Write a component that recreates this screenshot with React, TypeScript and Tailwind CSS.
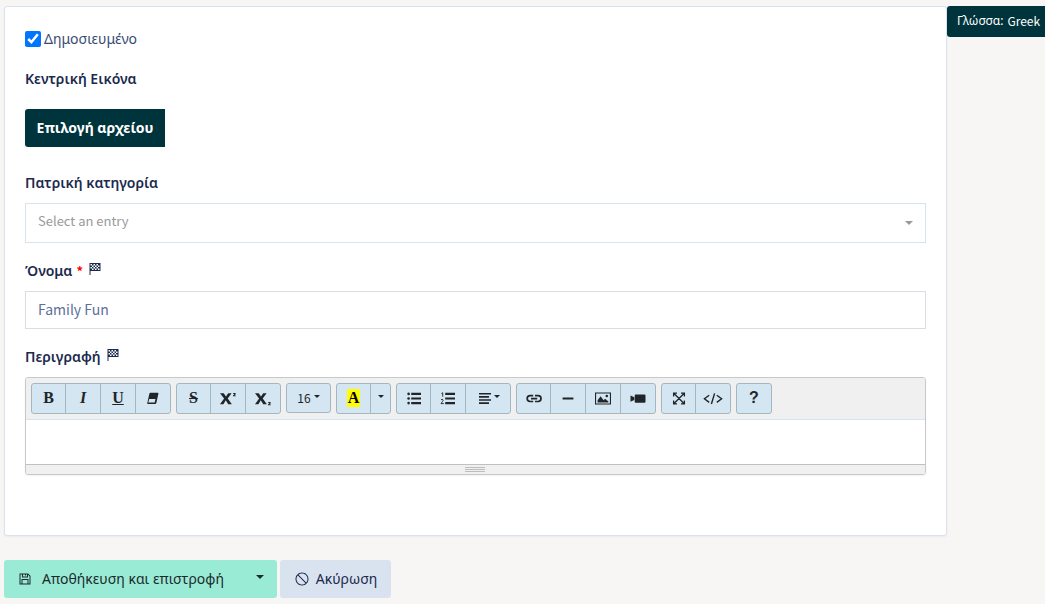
import type { ReactNode } from "react";
import { LiaBanSolid, LiaFlagCheckeredSolid, LiaSaveSolid } from "react-icons/lia";

const greek = "font-['Noto_Sans',sans-serif]";
const latin = "font-['Noto_Sans_CJK_SC',sans-serif]";

function Caret({ className = "" }: { className?: string }) {
  return (
    <svg viewBox="0 0 8 4" className={`h-1 w-2 shrink-0 fill-current ${className}`} aria-hidden="true">
      <path d="M0 0h8L4 4z" />
    </svg>
  );
}

function SmallCaret({ className = "" }: { className?: string }) {
  return (
    <svg viewBox="0 0 6 3" className={`h-[3px] w-1.5 shrink-0 fill-current ${className}`} aria-hidden="true">
      <path d="M0 0h6L3 3z" />
    </svg>
  );
}

function Icon({ children }: { children: ReactNode }) {
  return (
    <svg viewBox="0 0 16 16" className="size-4 shrink-0 fill-current" aria-hidden="true">
      {children}
    </svg>
  );
}

function Tool({ label, size = "w-9 first:w-[35px]", children }: { label: string; size?: string; children: ReactNode }) {
  return (
    <button
      type="button"
      aria-label={label}
      className={`-ml-px flex h-[31px] items-center justify-center border border-[#a4b7c1] bg-[#d4e6f1] pb-px text-[#212529] first:ml-0 first:rounded-l-[3px] last:rounded-r-[3px] ${size}`}
    >
      {children}
    </button>
  );
}

function Group({ children }: { children: ReactNode }) {
  return <div className="flex">{children}</div>;
}

const serif = "font-['Liberation_Serif',serif] text-base leading-[18px] font-bold";
const labelText = `flex h-6 items-center text-sm font-semibold text-[#1b2a4e] ${greek}`;

function Toolbar() {
  return (
    <div className="flex flex-wrap gap-[5px] border-b border-[#d9e2ef] bg-[#f0f0f0] px-[5px] py-[5px]">
      <Group>
        <Tool label="Bold"><span className={serif}>B</span></Tool>
        <Tool label="Italic"><span className={`${serif} italic`}>I</span></Tool>
        <Tool label="Underline"><span className={`${serif} underline`}>U</span></Tool>
        <Tool label="Remove Font Style">
          <Icon>
            <path fillRule="evenodd" d="M5.3 2.8h7.5q.9 0 .6.9l-2 9q-.3 1.2-1.4 1.2H3q-1 0-.7-1l2-9q.2-1.1 1-1.1zM4.2 9l-.9 3.6h6.3l.9-3.6z" />
          </Icon>
        </Tool>
      </Group>
      <Group>
        <Tool label="Strikethrough"><span className={`${serif} line-through`}>S</span></Tool>
        <Tool label="Superscript">
          <Icon>
            <path d="M0 3.2h3.7L6 6.6l2.2-3.4h3.4L7.7 8.4l4.2 5.8H8.2L5.8 10.3l-2.4 3.9H0l4.1-5.6z" />
            <path d="M13.2 3h2.4v1.4l-1.1 1h1.3v.8H13v-.8l1.6-1.5h-1.4z" />
          </Icon>
        </Tool>
        <Tool label="Subscript">
          <Icon>
            <path d="M0 3.2h3.7L6 6.6l2.2-3.4h3.4L7.7 8.4l4.2 5.8H8.2L5.8 10.3l-2.4 3.9H0l4.1-5.6z" />
            <path d="M13.2 12h2.4v1.4l-1.1 1h1.3v.8H13v-.8l1.6-1.5h-1.4z" />
          </Icon>
        </Tool>
      </Group>
      <Group>
        <button
          type="button"
          aria-label="Font Size"
          className={`flex h-[30px] w-[45px] items-center justify-center gap-[3px] rounded-[3px] border border-[#a4b7c1] bg-[#d4e6f1] text-xs text-[#212529] ${latin}`}
        >
          16
          <SmallCaret className="mb-1" />
        </button>
      </Group>
      <Group>
        <Tool label="Recent Color"><span className={`${serif} bg-[#ffff00] px-px text-black`}>A</span></Tool>
        <Tool label="More Color" size="w-[21px]"><SmallCaret className="mb-1" /></Tool>
      </Group>
      <Group>
        <Tool label="Unordered list">
          <Icon>
            <path d="M5.2 2.8H15V5H5.2zM5.2 7.4H15v2.2H5.2zM5.2 12H15v2.2H5.2z" />
            <circle cx="2.6" cy="3.9" r="1.3" />
            <circle cx="2.6" cy="8.5" r="1.3" />
            <circle cx="2.6" cy="13.1" r="1.3" />
          </Icon>
        </Tool>
        <Tool label="Ordered list">
          <Icon>
            <path d="M5.2 2.8H15V5H5.2zM5.2 7.4H15v2.2H5.2zM5.2 12H15v2.2H5.2z" />
            <path d="M1.4 3.6 2.7 2.7v4M1 9.8q1.2-1 2 0 .4.8-.4 1.6L1 13.6h2.8" fill="none" stroke="currentColor" strokeWidth=".9" />
          </Icon>
        </Tool>
        <Tool label="Paragraph" size="w-[46px]">
          <Icon><path d="M2 3h12v1.6H2zM2 6.1h10v1.6H2zM2 9.2h12v1.6H2zM2 12.3h10v1.6H2z" /></Icon>
          <SmallCaret className="mb-1 ml-px" />
        </Tool>
      </Group>
      <Group>
        <Tool label="Link">
          <Icon>
            <path d="M7.2 11.5H4.1a2.9 2.9 0 1 1 0-5.8h3.1M9 5.7h3.1a2.9 2.9 0 1 1 0 5.8H9M5 8.6h6.2" fill="none" stroke="currentColor" strokeWidth="1.7" />
          </Icon>
        </Tool>
        <Tool label="Insert Horizontal Rule"><Icon><path d="M2.6 7.4h10.8v2.2H2.6z" /></Icon></Tool>
        <Tool label="Picture">
          <Icon>
            <path fillRule="evenodd" d="M0 2.5h16v12H0zM1.1 3.6v9.8h13.8V3.6z" />
            <path d="M2.6 12.6v-2.4l3-3.9 3 3.9 1.5-1.5 3.3 2.8v1.1z" />
            <circle cx="11.8" cy="6" r="1.3" />
          </Icon>
        </Tool>
        <Tool label="Video">
          <Icon><path d="M.5 5.4 4.2 7.3v2.6L.5 11.8zM5.7 4.4h8.8q1 0 1 1v6.4q0 1-1 1H5.7q-1 0-1-1V5.4q0-1 1-1z" /></Icon>
        </Tool>
      </Group>
      <Group>
        <Tool label="Full Screen">
          <Icon>
            <path d="m3 3.5 10 10M13 3.5l-10 10M2.6 6.5V3.1H6M10 3.1h3.4v3.4M13.4 10.5v3.4H10M6 13.9H2.6v-3.4" fill="none" stroke="currentColor" strokeWidth="1.3" />
          </Icon>
        </Tool>
        <Tool label="Code View">
          <svg viewBox="0 0 20 16" className="h-4 w-5 shrink-0" fill="none" stroke="currentColor" strokeWidth="1.4" aria-hidden="true">
            <path d="M6.2 5.2 1.4 8.8l4.8 3.6M13.8 5.2l4.8 3.6-4.8 3.6M11.6 3.4 8.4 14" />
          </svg>
        </Tool>
      </Group>
      <Group>
        <Tool label="Help" size="w-9"><span className="font-['Liberation_Sans',sans-serif] text-base leading-4 font-bold">?</span></Tool>
      </Group>
    </div>
  );
}

export default function App() {
  return (
    <div className={`min-h-screen bg-[#f7f6f5] pt-1.5 pb-1.5 pl-1 text-sm text-[#1b2a4e] ${greek}`}>
      <div className="flex items-start">
        <main className="min-w-0 flex-1 rounded-[3px] border border-[#d9e2ef] bg-white px-5 pt-5 pb-[60px] shadow-xs">
          <label className={`flex h-6 items-center gap-[3px] text-[#384c74] ${greek}`}>
            <input type="checkbox" defaultChecked className="size-4 accent-[#0075ff]" />
            Δημοσιευμένο
          </label>

          <div className={`mt-4 ${labelText}`}>Κεντρική Εικόνα</div>
          <button type="button" className="mt-[18px] flex h-[38px] w-[140px] items-center justify-center rounded-l-[3px] bg-[#00343c] text-sm font-bold text-white">
            Επιλογή αρχείου
          </button>

          <label htmlFor="parent" className={`mt-6 ${labelText}`}>Πατρική κατηγορία</label>
          <div className="relative mt-2">
            <select id="parent" className={`h-10 w-full appearance-none border border-[#d9e2ef] bg-white px-3 pb-1 text-[13px] text-[#999] ${latin}`}>
              <option>Select an entry</option>
            </select>
            <Caret className="pointer-events-none absolute top-[18px] right-[13px] text-[#999]" />
          </div>

          <label htmlFor="name" className={`mt-4 ${labelText}`}>
            Όνομα<span className={`ml-1 text-[13px] text-[#ff0000] ${latin}`}>*</span>
            <LiaFlagCheckeredSolid className="mb-1 ml-1 size-4" />
          </label>
          <input id="name" defaultValue="Family Fun" className={`mt-2 block h-[38px] w-full border border-[#d9dde4] px-3 pb-0.5 text-sm text-[#5c6f99] ${latin}`} />

          <label htmlFor="description" className={`mt-4 ${labelText}`}>
            Περιγραφή
            <LiaFlagCheckeredSolid className="mb-1 ml-1 size-4" />
          </label>
          <div className="mt-2 overflow-hidden rounded-[3px] border border-[#c8c8c8] shadow-xs">
            <Toolbar />
            <textarea id="description" className="block h-11 w-full resize-none p-2.5 outline-none" />
            <div className="flex h-2.5 flex-col items-center gap-px border-t border-[#c0c0c0] bg-[#f0f0f0] pt-0.5 pr-0.5">
              <span className="h-px w-5 bg-[#bdbdbd]" />
              <span className="h-px w-5 bg-[#bdbdbd]" />
              <span className="h-px w-5 bg-[#bdbdbd]" />
            </div>
          </div>
        </main>
        <button type="button" className="flex h-[31px] w-[98px] shrink-0 items-center rounded-l-[3px] bg-[#00343c] pb-0.5 pl-2.5 text-xs whitespace-nowrap text-white">
          Γλώσσα:<span className={`ml-1 ${latin}`}>Greek</span>
        </button>
      </div>

      <div className="mt-6 flex gap-[3px]">
        <div className="flex h-[38px] rounded-[3px] bg-[#9aebd5] text-[#1b2a2e]">
          <button type="button" className="flex w-[239px] items-center pl-[13px] whitespace-nowrap">
            <LiaSaveSolid className="mr-[9px] size-4" />
            Αποθήκευση και επιστροφή
          </button>
          <button type="button" aria-label="Περισσότερα" className="flex w-[34px] items-center justify-center">
            <Caret className="mb-1" />
          </button>
        </div>
        <button type="button" className="flex h-[38px] w-[111px] items-center justify-center gap-1.5 rounded-[3px] bg-[#d9e2ef]">
          <LiaBanSolid className="size-4" />
          Ακύρωση
        </button>
      </div>
    </div>
  );
}
